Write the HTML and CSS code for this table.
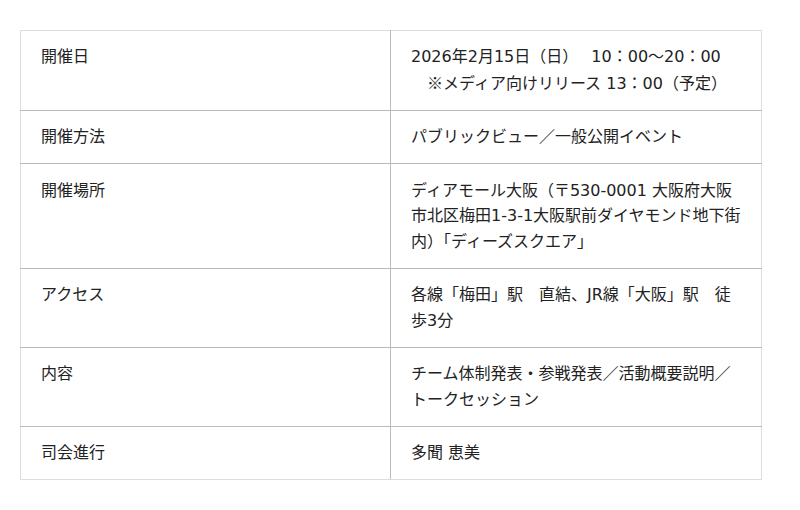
FILE: index.html
```html
<!DOCTYPE html>
<html lang="ja">
<head>
<meta charset="utf-8">
<link rel="stylesheet" href="styles.css">
</head>
<body>
<table class="info">
  <tr><th>開催日</th><td>2026年2月15日（日）　&nbsp;10：00～20：00<br>　<span class="cjk">※</span>メディア向けリリース 13：00（予定）</td></tr>
  <tr><th>開催方法</th><td>パブリックビュー／一般公開イベント</td></tr>
  <tr><th>開催場所</th><td>ディアモール大阪（〒530-0001 大阪府大阪市北区梅田1-3-1大阪駅前ダイヤモンド地下街内）「ディーズスクエア」</td></tr>
  <tr><th>アクセス</th><td>各線「梅田」駅　直結、JR線「大阪」駅　徒歩3分</td></tr>
  <tr><th>内容</th><td>チーム体制発表・参戦発表／活動概要説明／トークセッション</td></tr>
  <tr><th>司会進行</th><td>多聞 恵美</td></tr>
</table>
</body>
</html>
```
FILE: styles.css
```css
body {
  margin: 0;
  padding: 30px 0 0 20px;
  background: #fff;
  font-family: "DejaVu Sans", "Noto Sans CJK JP", sans-serif;
  color: #222;
}
.info {
  width: 742px;
  border-collapse: collapse;
  border: 1px solid #ddd;
  font-size: 16px;
  line-height: 1.6;
}
.info th, .info td {
  padding: 13.4px 20px;
  text-align: left;
  vertical-align: top;
  font-weight: normal;
  border-bottom: 1px solid #bbb;
}
.info tr:last-child th, .info tr:last-child td {
  border-bottom: 1px solid #ddd;
}
.info th {
  width: 329px;
  border-right: 1px solid #bbb;
}
.cjk {
  font-family: "Noto Sans CJK JP", sans-serif;
}
```
